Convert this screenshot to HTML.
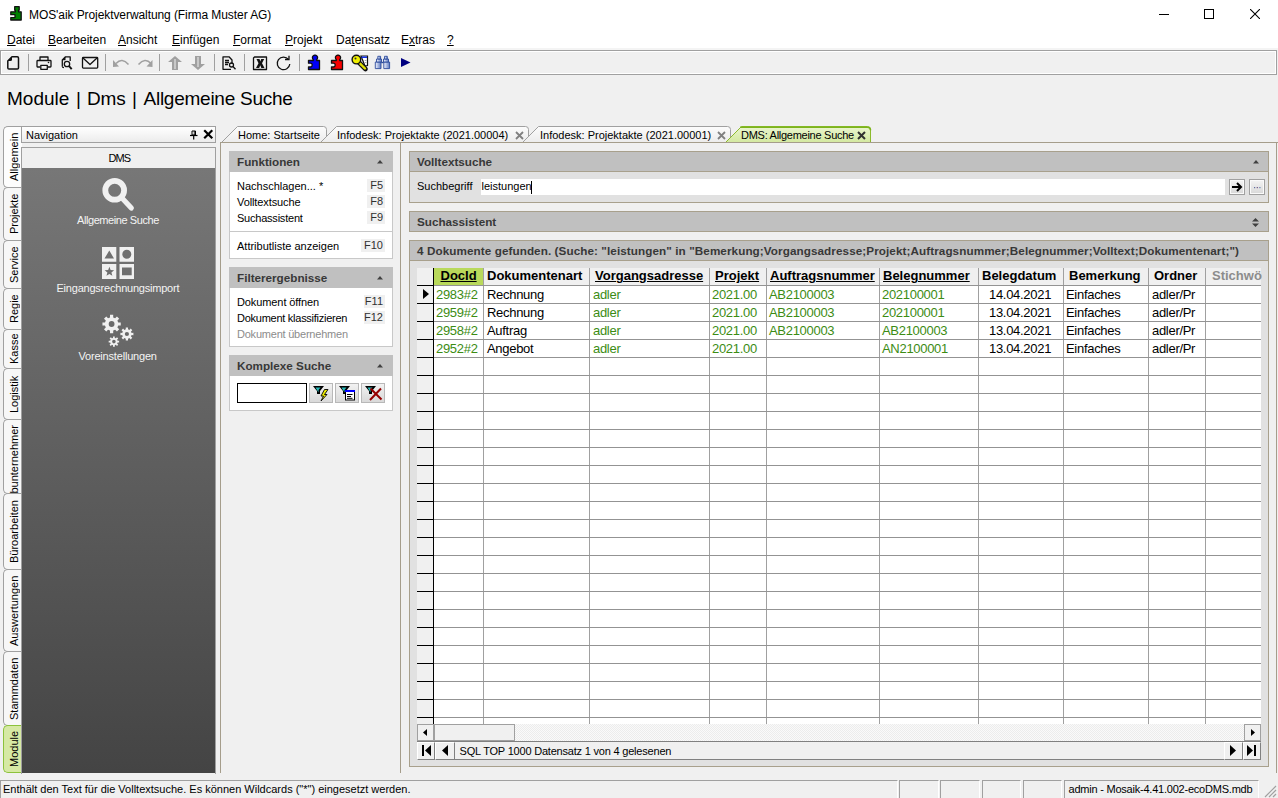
<!DOCTYPE html>
<html><head><meta charset="utf-8">
<style>
*{margin:0;padding:0;box-sizing:border-box}
html,body{width:1278px;height:798px;overflow:hidden;background:#f0f0f0;font-family:"Liberation Sans",sans-serif;color:#000;position:relative}
.a{position:absolute}
.t{position:absolute;white-space:nowrap;line-height:1}
.ul{text-decoration:underline;text-underline-offset:1px}
.sep{position:absolute;top:54px;width:1px;height:17px;background:#a0a0a0}
.ltab{position:absolute;left:3px;width:19px;border:1px solid #a0a0a0;border-right:none;border-radius:5px 0 0 5px;overflow:hidden}
.ltx{position:absolute;left:1.5px;top:0;width:17px;height:100%;writing-mode:vertical-rl;transform:rotate(180deg);text-align:center;font-size:11px;line-height:17px;white-space:nowrap}
.ph{position:absolute;background:#c0c0c0;border:1px solid #a8a08c}
.ht{position:absolute;white-space:nowrap;line-height:1;font-weight:bold;font-size:11.7px;color:#383838}
.it{position:absolute;white-space:nowrap;line-height:1;font-size:11px;color:#000}
.fk{position:absolute;background:#f0f0f0;font-size:11px;line-height:13px;height:13px;color:#303030;text-align:right;padding-right:2px}
.gl{position:absolute;background:#939393}
.gc{position:absolute;white-space:nowrap;line-height:1;font-size:13px;letter-spacing:-0.3px}
.gh{position:absolute;white-space:nowrap;line-height:1;font-size:13px;font-weight:bold}
.gr{color:#3c8c14}
.btn{position:absolute;background:#f0f0f0;border:1px solid #a0a0a0}
</style></head><body>
<div class="a" style="left:0;top:0;width:1278px;height:50px;background:#fff"></div>
<svg class="a" style="left:0;top:0" width="30" height="24" viewBox="0 0 30 24"><path d="M10.8,11.8 H15.4 V10.2 H14.7 V6.7 H19.2 V10.2 H18.5 V11.8 H21.2 V20 H10.8 V17.6 H15 V14.7 H10.8 Z" fill="#008000" stroke="#111" stroke-width="1.3" stroke-linejoin="round"/></svg>
<div class="t" style="left:29px;top:9px;font-size:12px;letter-spacing:-0.08px">MOS'aik Projektverwaltung (Firma Muster AG)</div>
<div class="a" style="left:1159px;top:14px;width:10px;height:1px;background:#000"></div>
<div class="a" style="left:1204px;top:9px;width:10px;height:10px;border:1px solid #000"></div>
<svg class="a" style="left:1250px;top:9px" width="10" height="10"><path d="M0 0L10 10M10 0L0 10" stroke="#000" stroke-width="1.1"/></svg>
<div class="t" style="left:7px;top:34px;font-size:12px"><span class="ul">D</span>atei</div>
<div class="t" style="left:48px;top:34px;font-size:12px"><span class="ul">B</span>earbeiten</div>
<div class="t" style="left:118px;top:34px;font-size:12px"><span class="ul">A</span>nsicht</div>
<div class="t" style="left:172px;top:34px;font-size:12px"><span class="ul">E</span>infügen</div>
<div class="t" style="left:233px;top:34px;font-size:12px"><span class="ul">F</span>ormat</div>
<div class="t" style="left:285px;top:34px;font-size:12px"><span class="ul">P</span>rojekt</div>
<div class="t" style="left:336px;top:34px;font-size:12px">Da<span class="ul">t</span>ensatz</div>
<div class="t" style="left:401px;top:34px;font-size:12px">E<span class="ul">x</span>tras</div>
<div class="t" style="left:447px;top:34px;font-size:12px"><span class="ul">?</span></div>
<div class="a" style="left:0;top:48px;width:1278px;height:2px;background:#f4f4f4"></div>
<div class="a" style="left:0;top:50px;width:1277px;height:25px;border:1px solid #a0a0a0;background:#f0f0f0;box-shadow:inset 0 0 0 1px #fff"></div>
<div class="sep" style="left:28px"></div>
<div class="sep" style="left:105px"></div>
<div class="sep" style="left:159px"></div>
<div class="sep" style="left:214px"></div>
<div class="sep" style="left:244px"></div>
<div class="sep" style="left:299px"></div>
<svg class="a" style="left:0;top:50px" width="420" height="25" viewBox="0 50 420 25">
<g fill="none" stroke="#111" stroke-width="1.5" stroke-linejoin="round">
<path d="M7.8,61 L12,56.8 H17.3 Q18.5,56.8 18.5,58 V68 Q18.5,69 17.3,69 H9 Q7.8,69 7.8,68 Z"/>
</g>
<path d="M7.5,61 L12,56.5 V59.5 Q12,61 10.5,61 Z" fill="#111"/><path d="M62,60.2 L65.5,56.7 V60.2 Z" fill="#111"/>
<g fill="none" stroke="#111" stroke-width="1.3" stroke-linejoin="round">
<path d="M40,60.5 V57 H48 V60.5"/>
<path d="M40,67 H37.5 Q37,67 37,66.3 V61.3 Q37,60.5 38,60.5 H50.3 Q51,60.5 51,61.3 V66.3 Q51,67 50.3,67 H48"/>
<rect x="40.8" y="65.3" width="6.5" height="4"/>
</g>
<circle cx="48.5" cy="62.5" r="0.8" fill="#111"/>
<g fill="none" stroke="#111" stroke-width="1.3" stroke-linejoin="round">
<path d="M62.3,66.3 V60 L65.5,56.8 H70.2 V61"/>
<path d="M62.3,66.3 Q62.3,67.7 64,67.7"/>
<circle cx="67" cy="64" r="2.7"/>
<path d="M69,66 L71.7,69.2" stroke-width="1.9"/>
<rect x="82.5" y="57.5" width="15.2" height="10.6" rx="0.8"/>
<path d="M83,58 L90,64.5 L97,58"/>
</g>
<g fill="none" stroke="#a0a0a0" stroke-width="1.6">
<path d="M116,63.5 Q122,57 128.5,64.5"/>
<path d="M151,63.5 Q145,57 138.5,64.5"/>
</g>
<path d="M113,60 L113,67 L119,66.5 Z" fill="#a0a0a0"/>
<path d="M152.5,60 L152.5,67 L146.5,66.5 Z" fill="#a0a0a0"/>
<path d="M175,56 L182,62 H178 V70 H172 V62 H168 Z" fill="#a0a0a0"/>
<path d="M175,59 V69" stroke="#f0f0f0" stroke-width="1" />
<path d="M198,70 L205,64 H201 V56 H195 V64 H191 Z" fill="#a0a0a0"/>
<path d="M198,57 V67" stroke="#f0f0f0" stroke-width="1"/>
<g fill="none" stroke="#111" stroke-width="1.3" stroke-linejoin="round">
<path d="M232,64 V60 L229,56.8 H223 V69.3 H231"/>
<path d="M225,60.5 H229 M225,62.5 H229 M225,64.5 H228"/>
<circle cx="231.5" cy="65" r="2"/>
<path d="M233,66.5 L235.5,69.2"/>
<path d="M254.5,57 H266.5 V69.5 H253.5 V58 Z"/>
</g>
<path d="M256.5,59 H259.5 L260.3,61.5 L261.2,59 H264.2 L262,63.3 L264.5,68 H261.3 L260.3,65.3 L259.2,68 H256 L258.5,63.3 Z" fill="#111"/>
<g fill="none" stroke="#111" stroke-width="1.3">
<path d="M288.5,59.5 A6.3,6.3 0 1 0 289.8,64"/>
<path d="M285,59.5 H289 V55.8"/>
</g>
<path d="M308.5,60.5 H313.3 V59.6 A2.6,2.6 0 1 1 316.7,59.6 V60.5 H319.5 V69.5 H308.5 V67 H310.3 A1.9,1.9 0 1 0 310.3,63.2 H308.5 Z" fill="#0000f8" stroke="#111" stroke-width="1.3" stroke-linejoin="round"/>
<path d="M331.5,60.5 H336.3 V59.6 A2.6,2.6 0 1 1 339.7,59.6 V60.5 H342.5 V69.5 H331.5 V67 H333.3 A1.9,1.9 0 1 0 333.3,63.2 H331.5 Z" fill="#f80000" stroke="#111" stroke-width="1.3" stroke-linejoin="round"/>
<path d="M361,56 H367.5 V65.5 L365,66 Z" fill="#fff" stroke="#111" stroke-width="1.2"/>
<path d="M361.5,56.5 H367 V58 H361.5 Z" fill="#1030f0"/>
<g fill="#888"><rect x="363.2" y="60" width="1" height="1"/><rect x="365.3" y="60" width="1" height="1"/><rect x="365.3" y="62" width="1" height="1"/></g>
<path d="M357.5,61 L365.5,69" stroke="#111" stroke-width="4.6" stroke-linecap="round"/>
<path d="M357.5,61 L365.3,68.8" stroke="#e0e000" stroke-width="2.4" stroke-linecap="round" stroke-dasharray="1 0.6"/>
<ellipse cx="356.4" cy="59.6" rx="4.3" ry="4.3" fill="#f0f000" stroke="#111" stroke-width="1.4"/>
<circle cx="355.5" cy="58.6" r="1" fill="#333"/>
<defs><linearGradient id="bg1" x1="0" y1="0" x2="1" y2="0"><stop offset="0" stop-color="#f4f6ff"/><stop offset="1" stop-color="#5a78c0"/></linearGradient></defs>
<g fill="url(#bg1)" stroke="#2c4c9c" stroke-width="0.9">
<path d="M375.3,62 H381 V68.6 H375.3 Z"/>
<path d="M383.8,62 H389.6 V68.6 H383.8 Z"/>
<path d="M376.5,59 H381.5 V62 H376.5 Z"/>
<path d="M383.5,59 H388.5 V62 H383.5 Z"/>
<path d="M377.8,56.3 H380.6 V59 H377.8 Z"/>
<path d="M384.5,56.3 H387.3 V59 H384.5 Z"/>
</g>
<path d="M381.2,62.5 H383.6" stroke="#2c4c9c" stroke-width="1.4"/>
<path d="M401,58 L410.5,62.5 L401,67 Z" fill="#000080"/>
</svg>
<div class="t" style="left:7px;top:89px;font-size:19px">Module</div>
<div class="t" style="left:76px;top:89px;font-size:19px">|</div>
<div class="t" style="left:87px;top:89px;font-size:19px;letter-spacing:-0.2px">Dms</div>
<div class="t" style="left:132px;top:89px;font-size:19px">|</div>
<div class="t" style="left:143.5px;top:89px;font-size:19px;letter-spacing:-0.25px">Allgemeine Suche</div>
<div class="ltab" style="top:126px;height:62px;background:#fdfdfd"><div class="ltx">Allgemein</div></div>
<div class="ltab" style="top:187px;height:54px;background:#f7f7f7"><div class="ltx">Projekte</div></div>
<div class="ltab" style="top:240px;height:49px;background:#f7f7f7"><div class="ltx">Service</div></div>
<div class="ltab" style="top:288px;height:42px;background:#f7f7f7"><div class="ltx">Regie</div></div>
<div class="ltab" style="top:329px;height:40px;background:#f7f7f7"><div class="ltx">Kasse</div></div>
<div class="ltab" style="top:368px;height:52px;background:#f7f7f7"><div class="ltx">Logistik</div></div>
<div class="ltab" style="top:419px;height:75px;background:#f7f7f7"><div class="ltx" style="height:87px;text-align:start">Subunternehmer</div></div>
<div class="ltab" style="top:493px;height:77px;background:#f7f7f7"><div class="ltx">Büroarbeiten</div></div>
<div class="ltab" style="top:569px;height:83px;background:#f7f7f7"><div class="ltx">Auswertungen</div></div>
<div class="ltab" style="top:651px;height:75px;background:#f7f7f7"><div class="ltx">Stammdaten</div></div>
<div class="ltab" style="top:725px;height:48px;background:#d6e9a4;border-color:#8cc23c"><div class="ltx">Module</div></div>
<div class="a" style="left:21px;top:126px;width:195px;height:17px;border:1px solid #a0a0a0;background:linear-gradient(#fff,#ececec)"></div>
<div class="t" style="left:26px;top:130px;font-size:11px">Navigation</div>
<svg class="a" style="left:188px;top:128px" width="28" height="13" viewBox="188 128 28 13"><path d="M192,131 H195.5 V135 H192 Z" fill="none" stroke="#000" stroke-width="1"/><path d="M194.3,131 V135" stroke="#000" stroke-width="0.8"/><path d="M190,135.5 H197.5" stroke="#000" stroke-width="1.2"/><path d="M193.7,135.5 V139.5" stroke="#000" stroke-width="1.2"/><path d="M205,131 L211.5,137.5 M211.5,131 L205,137.5" stroke="#000" stroke-width="2.2" stroke-linecap="square"/></svg>
<div class="a" style="left:21px;top:147px;width:195px;height:627px;border:1px solid #a0a0a0;border-bottom:none;background:#f0f0f0"></div>
<div class="t" style="left:108.5px;top:153px;font-size:11px;letter-spacing:-0.9px">DMS</div>
<div class="a" style="left:22px;top:168px;width:193px;height:605px;background:linear-gradient(#777,#444)"></div>
<svg class="a" style="left:95px;top:170px" width="45" height="180" viewBox="95 170 45 180">
<circle cx="114.7" cy="190.3" r="9.4" fill="none" stroke="#f0f0f0" stroke-width="5.8"/>
<path d="M121.5,197.5 L131.3,208" stroke="#f0f0f0" stroke-width="5.2" stroke-linecap="round"/>
<path d="M102,247 H116.3 V261.7 H102 Z M104.5,258.5 L109.3,250.5 L114,258.5 Z" fill="#f0f0f0" fill-rule="evenodd"/>
<path d="M119.5,247 H134 V261.7 H119.5 Z M131.3,254.3 A4.5,4.5 0 1 0 122.3,254.3 A4.5,4.5 0 1 0 131.3,254.3 Z" fill="#f0f0f0" fill-rule="evenodd"/>
<path d="M102,264 H116.3 V279 H102 Z M109.40,266.80 L110.63,270.10 L114.16,270.25 L111.40,272.45 L112.34,275.85 L109.40,273.90 L106.46,275.85 L107.40,272.45 L104.64,270.25 L108.17,270.10Z" fill="#f0f0f0" fill-rule="evenodd"/>
<path d="M119.5,264 H134 V279 H119.5 Z M122,267.4 V275.2 H131.7 V267.4 Z" fill="#f0f0f0" fill-rule="evenodd"/>
<path d="M110.01,317.39 L110.00,314.84 L113.20,314.84 L113.19,317.39 L115.15,318.20 L116.95,316.39 L119.21,318.65 L117.40,320.45 L118.21,322.41 L120.76,322.40 L120.76,325.60 L118.21,325.59 L117.40,327.55 L119.21,329.35 L116.95,331.61 L115.15,329.80 L113.19,330.61 L113.20,333.16 L110.00,333.16 L110.01,330.61 L108.05,329.80 L106.25,331.61 L103.99,329.35 L105.80,327.55 L104.99,325.59 L102.44,325.60 L102.44,322.40 L104.99,322.41 L105.80,320.45 L103.99,318.65 L106.25,316.39 L108.05,318.20Z M114.50,324.00 A2.9,2.9 0 1 0 108.70,324.00 A2.9,2.9 0 1 0 114.50,324.00Z" fill="#f0f0f0" fill-rule="evenodd"/>
<path d="M125.78,329.33 L125.77,327.50 L128.03,327.50 L128.02,329.33 L129.41,329.91 L130.70,328.60 L132.30,330.20 L130.99,331.49 L131.57,332.88 L133.40,332.87 L133.40,335.13 L131.57,335.12 L130.99,336.51 L132.30,337.80 L130.70,339.40 L129.41,338.09 L128.02,338.67 L128.03,340.50 L125.77,340.50 L125.78,338.67 L124.39,338.09 L123.10,339.40 L121.50,337.80 L122.81,336.51 L122.23,335.12 L120.40,335.13 L120.40,332.87 L122.23,332.88 L122.81,331.49 L121.50,330.20 L123.10,328.60 L124.39,329.91Z M129.00,334.00 A2.1,2.1 0 1 0 124.80,334.00 A2.1,2.1 0 1 0 129.00,334.00Z" fill="#f0f0f0" fill-rule="evenodd"/>
<path d="M113.01,337.90 L112.99,336.38 L114.81,336.38 L114.79,337.90 L115.89,338.36 L116.95,337.26 L118.24,338.55 L117.14,339.61 L117.60,340.71 L119.12,340.69 L119.12,342.51 L117.60,342.49 L117.14,343.59 L118.24,344.65 L116.95,345.94 L115.89,344.84 L114.79,345.30 L114.81,346.82 L112.99,346.82 L113.01,345.30 L111.91,344.84 L110.85,345.94 L109.56,344.65 L110.66,343.59 L110.20,342.49 L108.68,342.51 L108.68,340.69 L110.20,340.71 L110.66,339.61 L109.56,338.55 L110.85,337.26 L111.91,338.36Z M115.70,341.60 A1.8,1.8 0 1 0 112.10,341.60 A1.8,1.8 0 1 0 115.70,341.60Z" fill="#f0f0f0" fill-rule="evenodd"/>
</svg>
<div class="t" style="left:77px;top:214.5px;font-size:11px;color:#f4f4f4;letter-spacing:-0.42px">Allgemeine Suche</div>
<div class="t" style="left:56.5px;top:282.5px;font-size:11px;color:#f4f4f4;letter-spacing:-0.22px">Eingangsrechnungsimport</div>
<div class="t" style="left:78.5px;top:350.5px;font-size:11px;color:#f4f4f4;letter-spacing:-0.19px">Voreinstellungen</div>
<div class="a" style="left:220px;top:142px;width:1057px;height:631px;border:1px solid #a59d8b;border-bottom:none;background:#f0f0f0"></div>
<div class="a" style="left:400px;top:143px;width:1px;height:630px;background:#a59d8b"></div>
<svg class="a" style="left:0;top:0" width="1278" height="150"><defs><linearGradient id="tg" x1="0" y1="0" x2="0" y2="1"><stop offset="0" stop-color="#fcfcfc"/><stop offset="1" stop-color="#ececec"/></linearGradient><linearGradient id="tga" x1="0" y1="0" x2="0" y2="1"><stop offset="0" stop-color="#eaf5cf"/><stop offset="1" stop-color="#d3e8a0"/></linearGradient></defs><path d="M221.5,142.5 L237.5,126.5 L323.5,126.5 Q326.5,126.5 326.5,129.5 L326.5,142.5 Z" fill="url(#tg)" stroke="#a0a0a0" stroke-width="1"/><path d="M320.5,142.5 L336.5,126.5 L525.5,126.5 Q528.5,126.5 528.5,129.5 L528.5,142.5 Z" fill="url(#tg)" stroke="#a0a0a0" stroke-width="1"/><path d="M522.5,142.5 L538.5,126.5 L727.5,126.5 Q730.5,126.5 730.5,129.5 L730.5,142.5 Z" fill="url(#tg)" stroke="#a0a0a0" stroke-width="1"/><path d="M725.5,142.5 L741.5,126.5 L867.5,126.5 Q870.5,126.5 870.5,129.5 L870.5,142.5 Z" fill="url(#tga)" stroke="#8cba2c" stroke-width="1"/><path d="M740,127.2 H867.5 Q870.5,127.2 870.5,130.2" fill="none" stroke="#7cb41c" stroke-width="1.6"/><path d="M220,142.5 H1278" stroke="#a59d8b" stroke-width="1"/></svg>
<div class="t" style="left:238px;top:130px;font-size:11px">Home: Startseite</div>
<div class="t" style="left:337px;top:130px;font-size:11px">Infodesk: Projektakte (2021.00004)</div>
<div class="t" style="left:540px;top:130px;font-size:11px">Infodesk: Projektakte (2021.00001)</div>
<div class="t" style="left:741px;top:130px;font-size:11px;letter-spacing:-0.27px">DMS: Allgemeine Suche</div>
<svg class="a" style="left:515px;top:131px" width="9" height="9"><path d="M1 1L8 8M8 1L1 8" stroke="#808080" stroke-width="1.8"/></svg>
<svg class="a" style="left:717px;top:131px" width="9" height="9"><path d="M1 1L8 8M8 1L1 8" stroke="#808080" stroke-width="1.8"/></svg>
<svg class="a" style="left:857px;top:131px" width="9" height="9"><path d="M1 1L8 8M8 1L1 8" stroke="#303030" stroke-width="2"/></svg>
<div class="a" style="left:229px;top:151px;width:164px;height:21px;background:#c0c0c0"></div>
<div class="ht" style="left:237px;top:156px">Funktionen</div>
<svg class="a" style="left:376.5px;top:160px" width="7" height="4"><path d="M0 3.5L3 0L6 3.5Z" fill="#404040"/></svg>
<div class="a" style="left:229px;top:172px;width:164px;height:87px;background:#fff;border:1px solid #c8c8c8;border-top:none"></div>
<div class="a" style="left:230px;top:231px;width:162px;height:1px;background:#c8c8c8"></div>
<div class="it" style="left:237px;top:181px;letter-spacing:0px">Nachschlagen... *</div>
<div class="fk" style="left:367px;top:179px;width:18px">F5</div>
<div class="it" style="left:237px;top:197px;letter-spacing:-0.1px">Volltextsuche</div>
<div class="fk" style="left:367px;top:195px;width:18px">F8</div>
<div class="it" style="left:237px;top:213px;letter-spacing:-0.22px">Suchassistent</div>
<div class="fk" style="left:367px;top:211px;width:18px">F9</div>
<div class="it" style="left:237px;top:241px">Attributliste anzeigen</div>
<div class="fk" style="left:361px;top:239px;width:24px">F10</div>
<div class="a" style="left:229px;top:267px;width:164px;height:21px;background:#c0c0c0"></div>
<div class="ht" style="left:237px;top:272px">Filterergebnisse</div>
<svg class="a" style="left:376.5px;top:276px" width="7" height="4"><path d="M0 3.5L3 0L6 3.5Z" fill="#404040"/></svg>
<div class="a" style="left:229px;top:288px;width:164px;height:59px;background:#fff;border:1px solid #c8c8c8;border-top:none"></div>
<div class="it" style="left:237px;top:297px;letter-spacing:-0.1px">Dokument öffnen</div>
<div class="fk" style="left:364px;top:295px;width:21px">F11</div>
<div class="it" style="left:237px;top:313px;letter-spacing:-0.26px">Dokument klassifizieren</div>
<div class="fk" style="left:364px;top:311px;width:21px">F12</div>
<div class="it" style="left:237px;top:329px;color:#8c8c8c;letter-spacing:-0.22px">Dokument übernehmen</div>
<div class="a" style="left:229px;top:355px;width:164px;height:21px;background:#c0c0c0"></div>
<div class="ht" style="left:237px;top:360px">Komplexe Suche</div>
<svg class="a" style="left:376.5px;top:364px" width="7" height="4"><path d="M0 3.5L3 0L6 3.5Z" fill="#404040"/></svg>
<div class="a" style="left:229px;top:376px;width:164px;height:35px;background:#fff;border:1px solid #c8c8c8;border-top:none"></div>
<div class="a" style="left:237px;top:383px;width:70px;height:20px;background:#fff;border:1px solid #000"></div>
<div class="btn" style="left:309px;top:383px;width:24px;height:20px;border-color:#b8b8b8;background:linear-gradient(#f2f2f2,#d9d9d9)"></div>
<div class="btn" style="left:335px;top:383px;width:24px;height:20px;border-color:#b8b8b8;background:linear-gradient(#f2f2f2,#d9d9d9)"></div>
<div class="btn" style="left:361px;top:383px;width:24px;height:20px;border-color:#b8b8b8;background:linear-gradient(#f2f2f2,#d9d9d9)"></div>
<svg class="a" style="left:300px;top:380px" width="90" height="26" viewBox="300 380 90 26"><path d="M313,386 H324 L320,391 V394 H317 V391 Z" fill="#000"/><path d="M315.5,387.5 H320.5 L318.5,390 V392.5 Z" fill="#28b8b8"/><path d="M339,386 H350 L346,391 V394 H343 V391 Z" fill="#000"/><path d="M341.5,387.5 H346.5 L344.5,390 V392.5 Z" fill="#28b8b8"/><path d="M365,386 H376 L372,391 V394 H369 V391 Z" fill="#000"/><path d="M367.5,387.5 H372.5 L370.5,390 V392.5 Z" fill="#28b8b8"/><path d="M324.5,389.5 L328,389.5 L324.5,394.5 L327,394.5 L321,401 L323.5,396 L321,396 Z" fill="#f0f000" stroke="#000" stroke-width="0.9"/><rect x="345.5" y="390.5" width="9" height="9.5" fill="#fff" stroke="#000" stroke-width="1"/><rect x="345" y="390" width="10" height="2" fill="#0000ff"/><path d="M347,394.5 H352.5 M347,396.5 H351 M347,398.3 H352.5" stroke="#000" stroke-width="1"/><path d="M370,400 L381,388.5 M370.5,388.5 L381.5,399.5" stroke="#960000" stroke-width="2"/></svg>
<div class="a" style="left:409px;top:151px;width:860px;height:21px;background:#c0c0c0;border:1px solid #a8a08c"></div>
<div class="ht" style="left:417px;top:156px">Volltextsuche</div>
<svg class="a" style="left:1252.5px;top:160px" width="7" height="4"><path d="M0 3.5L3 0L6 3.5Z" fill="#404040"/></svg>
<div class="a" style="left:409px;top:172px;width:860px;height:31px;background:#e1e1e1;border:1px solid #a8a08c;border-top:none"></div>
<div class="it" style="left:417px;top:181px">Suchbegriff</div>
<div class="a" style="left:481px;top:179px;width:744px;height:16px;background:#fff"></div>
<div class="it" style="left:481.5px;top:181px">leistungen</div>
<div class="a" style="left:531px;top:181px;width:1px;height:13px;background:#000"></div>
<div class="btn" style="left:1229px;top:179px;width:16px;height:16px;box-shadow:inset 0 0 0 1px #fafafa;background:linear-gradient(#f4f4f4,#d8d8d8)"></div>
<svg class="a" style="left:1231px;top:182px" width="12" height="10"><path d="M1 5H10M6 1L10 5L6 9" stroke="#000" stroke-width="2" fill="none"/></svg>
<div class="btn" style="left:1249px;top:179px;width:16px;height:16px;box-shadow:inset 0 0 0 1px #fafafa;background:linear-gradient(#f4f4f4,#d8d8d8)"></div>
<svg class="a" style="left:1253px;top:186px" width="9" height="3"><rect x="1" y="1" width="1.2" height="1.2" fill="#6070a0"/><rect x="3.7" y="1" width="1.2" height="1.2" fill="#705080"/><rect x="6.3" y="1" width="1.2" height="1.2" fill="#6080b0"/></svg>
<div class="a" style="left:409px;top:211px;width:860px;height:21px;background:#c0c0c0;border:1px solid #a8a08c"></div>
<div class="ht" style="left:417px;top:216px">Suchassistent</div>
<svg class="a" style="left:1252px;top:218px" width="7" height="9"><path d="M0 3.5L3.5 0L7 3.5ZM0 5.5L3.5 9L7 5.5Z" fill="#404040"/></svg>
<div class="a" style="left:409px;top:240px;width:860px;height:21px;background:#c0c0c0;border:1px solid #a8a08c"></div>
<div class="ht" style="left:417px;top:245px"><span style="letter-spacing:0.085px">4 Dokumente gefunden. (Suche: "leistungen" in "Bemerkung;Vorgangsadresse;Projekt;Auftragsnummer;Belegnummer;Volltext;Dokumentenart;")</span></div>
<div class="a" style="left:409px;top:261px;width:860px;height:506px;background:#e1e1e1;border:1px solid #a8a08c;border-top:none"></div>
<div class="a" style="left:417px;top:268px;width:844px;height:456px;background:#fff"></div>
<div class="a" style="left:417px;top:268px;width:844px;height:17px;background:#f0f0f0"></div>
<div class="a" style="left:417px;top:268px;width:16px;height:456px;background:#f0f0f0"></div>
<div class="a" style="left:434px;top:268px;width:49px;height:17px;background:#b9d95b"></div>
<div class="gl" style="left:433px;top:268px;width:1px;height:456px;background:#000"></div>
<div class="gl" style="left:483px;top:268px;width:1px;height:456px;background:#a0a0a0"></div>
<div class="gl" style="left:589px;top:268px;width:1px;height:456px;background:#a0a0a0"></div>
<div class="gl" style="left:709px;top:268px;width:1px;height:456px;background:#a0a0a0"></div>
<div class="gl" style="left:766px;top:268px;width:1px;height:456px;background:#a0a0a0"></div>
<div class="gl" style="left:879px;top:268px;width:1px;height:456px;background:#a0a0a0"></div>
<div class="gl" style="left:978px;top:268px;width:1px;height:456px;background:#a0a0a0"></div>
<div class="gl" style="left:1063px;top:268px;width:1px;height:456px;background:#a0a0a0"></div>
<div class="gl" style="left:1148px;top:268px;width:1px;height:456px;background:#a0a0a0"></div>
<div class="gl" style="left:1205px;top:268px;width:1px;height:456px;background:#a0a0a0"></div>
<div class="gl" style="left:417px;top:285px;width:16px;height:1px;background:#000"></div>
<div class="gl" style="left:434px;top:285px;width:827px;height:1px"></div>
<div class="gl" style="left:417px;top:303px;width:16px;height:1px;background:#000"></div>
<div class="gl" style="left:434px;top:303px;width:827px;height:1px"></div>
<div class="gl" style="left:417px;top:321px;width:16px;height:1px;background:#000"></div>
<div class="gl" style="left:434px;top:321px;width:827px;height:1px"></div>
<div class="gl" style="left:417px;top:339px;width:16px;height:1px;background:#000"></div>
<div class="gl" style="left:434px;top:339px;width:827px;height:1px"></div>
<div class="gl" style="left:417px;top:357px;width:16px;height:1px;background:#000"></div>
<div class="gl" style="left:434px;top:357px;width:827px;height:1px"></div>
<div class="gl" style="left:417px;top:375px;width:16px;height:1px;background:#000"></div>
<div class="gl" style="left:434px;top:375px;width:827px;height:1px"></div>
<div class="gl" style="left:417px;top:393px;width:16px;height:1px;background:#000"></div>
<div class="gl" style="left:434px;top:393px;width:827px;height:1px"></div>
<div class="gl" style="left:417px;top:411px;width:16px;height:1px;background:#000"></div>
<div class="gl" style="left:434px;top:411px;width:827px;height:1px"></div>
<div class="gl" style="left:417px;top:429px;width:16px;height:1px;background:#000"></div>
<div class="gl" style="left:434px;top:429px;width:827px;height:1px"></div>
<div class="gl" style="left:417px;top:447px;width:16px;height:1px;background:#000"></div>
<div class="gl" style="left:434px;top:447px;width:827px;height:1px"></div>
<div class="gl" style="left:417px;top:465px;width:16px;height:1px;background:#000"></div>
<div class="gl" style="left:434px;top:465px;width:827px;height:1px"></div>
<div class="gl" style="left:417px;top:483px;width:16px;height:1px;background:#000"></div>
<div class="gl" style="left:434px;top:483px;width:827px;height:1px"></div>
<div class="gl" style="left:417px;top:501px;width:16px;height:1px;background:#000"></div>
<div class="gl" style="left:434px;top:501px;width:827px;height:1px"></div>
<div class="gl" style="left:417px;top:519px;width:16px;height:1px;background:#000"></div>
<div class="gl" style="left:434px;top:519px;width:827px;height:1px"></div>
<div class="gl" style="left:417px;top:537px;width:16px;height:1px;background:#000"></div>
<div class="gl" style="left:434px;top:537px;width:827px;height:1px"></div>
<div class="gl" style="left:417px;top:555px;width:16px;height:1px;background:#000"></div>
<div class="gl" style="left:434px;top:555px;width:827px;height:1px"></div>
<div class="gl" style="left:417px;top:573px;width:16px;height:1px;background:#000"></div>
<div class="gl" style="left:434px;top:573px;width:827px;height:1px"></div>
<div class="gl" style="left:417px;top:591px;width:16px;height:1px;background:#000"></div>
<div class="gl" style="left:434px;top:591px;width:827px;height:1px"></div>
<div class="gl" style="left:417px;top:609px;width:16px;height:1px;background:#000"></div>
<div class="gl" style="left:434px;top:609px;width:827px;height:1px"></div>
<div class="gl" style="left:417px;top:627px;width:16px;height:1px;background:#000"></div>
<div class="gl" style="left:434px;top:627px;width:827px;height:1px"></div>
<div class="gl" style="left:417px;top:645px;width:16px;height:1px;background:#000"></div>
<div class="gl" style="left:434px;top:645px;width:827px;height:1px"></div>
<div class="gl" style="left:417px;top:663px;width:16px;height:1px;background:#000"></div>
<div class="gl" style="left:434px;top:663px;width:827px;height:1px"></div>
<div class="gl" style="left:417px;top:681px;width:16px;height:1px;background:#000"></div>
<div class="gl" style="left:434px;top:681px;width:827px;height:1px"></div>
<div class="gl" style="left:417px;top:699px;width:16px;height:1px;background:#000"></div>
<div class="gl" style="left:434px;top:699px;width:827px;height:1px"></div>
<div class="gl" style="left:417px;top:717px;width:16px;height:1px;background:#000"></div>
<div class="gl" style="left:434px;top:717px;width:827px;height:1px"></div>
<div class="gh ul" style="left:440.5px;top:269.3px;color:#000">DocId</div>
<div class="gh" style="left:487px;top:269.3px;color:#000">Dokumentenart</div>
<div class="gh ul" style="left:595px;top:269.3px;color:#000">Vorgangsadresse</div>
<div class="gh ul" style="left:715px;top:269.3px;color:#000">Projekt</div>
<div class="gh ul" style="left:770px;top:269.3px;color:#000">Auftragsnummer</div>
<div class="gh ul" style="left:883px;top:269.3px;color:#000">Belegnummer</div>
<div class="gh" style="left:982px;top:269.3px;color:#000">Belegdatum</div>
<div class="gh" style="left:1069px;top:269.3px;color:#000">Bemerkung</div>
<div class="gh" style="left:1154px;top:269.3px;color:#000">Ordner</div>
<div class="gh" style="left:1212px;top:269.3px;color:#8c8c8c">Stichwö</div>
<div class="gc gr" style="left:436px;top:287.8px">2983#2</div>
<div class="gc" style="left:487px;top:287.8px">Rechnung</div>
<div class="gc gr" style="left:593px;top:287.8px">adler</div>
<div class="gc gr" style="left:712px;top:287.8px">2021.00</div>
<div class="gc gr" style="left:769px;top:287.8px">AB2100003</div>
<div class="gc gr" style="left:882px;top:287.8px">202100001</div>
<div class="gc" style="left:989px;top:287.8px">14.04.2021</div>
<div class="gc" style="left:1066px;top:287.8px">Einfaches</div>
<div class="gc" style="left:1152px;top:287.8px">adler/Pr</div>
<div class="gc gr" style="left:436px;top:305.8px">2959#2</div>
<div class="gc" style="left:487px;top:305.8px">Rechnung</div>
<div class="gc gr" style="left:593px;top:305.8px">adler</div>
<div class="gc gr" style="left:712px;top:305.8px">2021.00</div>
<div class="gc gr" style="left:769px;top:305.8px">AB2100003</div>
<div class="gc gr" style="left:882px;top:305.8px">202100001</div>
<div class="gc" style="left:989px;top:305.8px">13.04.2021</div>
<div class="gc" style="left:1066px;top:305.8px">Einfaches</div>
<div class="gc" style="left:1152px;top:305.8px">adler/Pr</div>
<div class="gc gr" style="left:436px;top:323.8px">2958#2</div>
<div class="gc" style="left:487px;top:323.8px">Auftrag</div>
<div class="gc gr" style="left:593px;top:323.8px">adler</div>
<div class="gc gr" style="left:712px;top:323.8px">2021.00</div>
<div class="gc gr" style="left:769px;top:323.8px">AB2100003</div>
<div class="gc gr" style="left:882px;top:323.8px">AB2100003</div>
<div class="gc" style="left:989px;top:323.8px">13.04.2021</div>
<div class="gc" style="left:1066px;top:323.8px">Einfaches</div>
<div class="gc" style="left:1152px;top:323.8px">adler/Pr</div>
<div class="gc gr" style="left:436px;top:341.8px">2952#2</div>
<div class="gc" style="left:487px;top:341.8px">Angebot</div>
<div class="gc gr" style="left:593px;top:341.8px">adler</div>
<div class="gc gr" style="left:712px;top:341.8px">2021.00</div>
<div class="gc gr" style="left:882px;top:341.8px">AN2100001</div>
<div class="gc" style="left:989px;top:341.8px">13.04.2021</div>
<div class="gc" style="left:1066px;top:341.8px">Einfaches</div>
<div class="gc" style="left:1152px;top:341.8px">adler/Pr</div>
<svg class="a" style="left:423px;top:289px" width="6" height="10"><path d="M0 0L6 5L0 10Z" fill="#000"/></svg>
<div class="a" style="left:417px;top:724px;width:844px;height:17px;background:#f4f4f4;background-image:repeating-conic-gradient(#ececec 0 25%,#fafafa 0 50%);background-size:2px 2px"></div>
<div class="btn" style="left:417px;top:724px;width:17px;height:17px"></div>
<svg class="a" style="left:423px;top:729px" width="4" height="7"><path d="M4 0L0 3.5L4 7Z" fill="#000"/></svg>
<div class="btn" style="left:434px;top:724px;width:81px;height:17px"></div>
<div class="btn" style="left:1244px;top:724px;width:17px;height:17px"></div>
<svg class="a" style="left:1251px;top:729px" width="4" height="7"><path d="M0 0L4 3.5L0 7Z" fill="#000"/></svg>
<div class="a" style="left:417px;top:741px;width:844px;height:19px;background:#f0f0f0;border-top:1px solid #808080;border-bottom:1px solid #808080"></div>
<div class="btn" style="left:417px;top:742px;width:18px;height:18px;border-color:#fff #808080 #808080 #fff"></div>
<div class="btn" style="left:435px;top:742px;width:20px;height:18px;border-color:#fff #808080 #808080 #fff"></div>
<div class="btn" style="left:1224px;top:742px;width:19px;height:18px;border-color:#fff #808080 #808080 #fff"></div>
<div class="btn" style="left:1243px;top:742px;width:18px;height:18px;border-color:#fff #808080 #808080 #fff"></div>
<svg class="a" style="left:422px;top:745px" width="9" height="11"><path d="M0 0H2V11H0ZM9 0L3 5.5L9 11Z" fill="#000"/></svg>
<svg class="a" style="left:442px;top:745px" width="6" height="11"><path d="M6 0L0 5.5L6 11Z" fill="#000"/></svg>
<svg class="a" style="left:1230px;top:745px" width="6" height="11"><path d="M0 0L6 5.5L0 11Z" fill="#000"/></svg>
<svg class="a" style="left:1247px;top:745px" width="9" height="11"><path d="M0 0L6 5.5L0 11ZM7 0H9V11H7Z" fill="#000"/></svg>
<div class="it" style="left:459.5px;top:745.5px;letter-spacing:-0.2px">SQL TOP 1000 Datensatz 1 von 4 gelesenen</div>
<div class="a" style="left:0px;top:780px;width:898px;height:18px;border-top:1px solid #a0a0a0;border-left:1px solid #a0a0a0;border-right:1px solid #fff"></div>
<div class="a" style="left:899px;top:780px;width:40px;height:18px;border-top:1px solid #a0a0a0;border-left:1px solid #a0a0a0;border-right:1px solid #fff"></div>
<div class="a" style="left:940px;top:780px;width:40px;height:18px;border-top:1px solid #a0a0a0;border-left:1px solid #a0a0a0;border-right:1px solid #fff"></div>
<div class="a" style="left:982px;top:780px;width:39px;height:18px;border-top:1px solid #a0a0a0;border-left:1px solid #a0a0a0;border-right:1px solid #fff"></div>
<div class="a" style="left:1023px;top:780px;width:39px;height:18px;border-top:1px solid #a0a0a0;border-left:1px solid #a0a0a0;border-right:1px solid #fff"></div>
<div class="a" style="left:1064px;top:780px;width:195px;height:18px;border-top:1px solid #a0a0a0;border-left:1px solid #a0a0a0;border-right:1px solid #fff"></div>
<svg class="a" style="left:1262px;top:783px" width="16" height="15"><path d="M3,14 L14,3 M7,14 L14,7 M11,14 L14,11" stroke="#a0a0a0" stroke-width="1.2"/></svg>
<div class="t" style="left:3px;top:783.5px;font-size:11px">Enthält den Text für die Volltextsuche. Es können Wildcards ("*") eingesetzt werden.</div>
<div class="t" style="left:1068.5px;top:783.5px;font-size:11px;letter-spacing:-0.22px">admin - Mosaik-4.41.002-ecoDMS.mdb</div>
</body></html>
